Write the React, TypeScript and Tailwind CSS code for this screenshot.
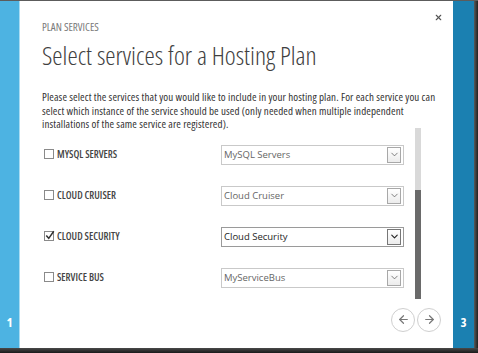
import { ChevronDown, ArrowLeft, ArrowRight, X } from "lucide-react";

type Service = { label: string; value: string; checked: boolean; active?: boolean };

const services: Service[] = [
  { label: "MYSQL SERVERS", value: "MySQL Servers", checked: false },
  { label: "CLOUD CRUISER", value: "Cloud Cruiser", checked: false },
  { label: "CLOUD SECURITY", value: "Cloud Security", checked: true, active: true },
  { label: "SERVICE BUS", value: "MyServiceBus", checked: false },
];

function Checkbox({ checked }: { checked: boolean }) {
  return (
    <span className="relative block size-[10px] border border-[#8a8a8a] bg-white">
      {checked && (
        <svg viewBox="0 0 12 12" className="absolute -top-[2px] left-0 size-[10px]">
          <path d="M1.5 6.5 L4.5 10 L10.5 1.5" fill="none" stroke="#333" strokeWidth="1.8" />
        </svg>
      )}
    </span>
  );
}

function ServiceSelect({ value, active }: { value: string; active?: boolean }) {
  return (
    <div
      className={`flex h-[20px] w-[183px] items-center justify-between border bg-white pl-[2px] pr-[2px] ${
        active ? "border-[#9a9a9a] text-[#1e1e1e]" : "border-[#c9c9c9] text-[#666]"
      }`}
    >
      <span className="text-[9.5px] leading-none">{value}</span>
      <span
        className={`flex h-[16px] w-[14px] items-center justify-center border bg-gradient-to-b from-white to-[#ececec] ${
          active ? "border-[#777]" : "border-[#a8a8a8]"
        }`}
      >
        <ChevronDown className="size-[11px]" strokeWidth={active ? 2.4 : 1.6} color={active ? "#222" : "#555"} />
      </span>
    </div>
  );
}

export default function App() {
  return (
    <div className="flex h-[353px] w-[478px] flex-col bg-[#2a2a2a] font-['Open_Sans',sans-serif]">
      <div className="h-px bg-[#5c5c5c]" />
      <div className="flex min-h-0 flex-1">
        <div className="flex w-[20px] items-end justify-center border-r border-[#a9dcf3] bg-[#4db3e2] pb-[20px]">
          <span className="text-[13px] font-bold leading-[12px] text-white font-stretch-condensed">1</span>
        </div>

        <main className="relative flex-1 bg-white pl-[22px]">
          <button type="button" className="absolute right-[10px] top-[12px] text-[#555]">
            <X className="size-[9px]" strokeWidth={3} />
          </button>

          <p className="pt-[20px] text-[11px] leading-[12px] text-[#7a7a7a] font-stretch-condensed">PLAN SERVICES</p>
          <h1 className="mt-[7px] text-[26px] font-light leading-[30px] text-[#404040] font-stretch-condensed">
            Select services for a Hosting Plan
          </h1>
          <p className="mt-[20px] w-[395px] text-[11px] leading-[13.5px] tracking-[0.12px] text-[#333] font-stretch-condensed">
            Please select the services that you would like to include in your hosting plan. For each service you can
            select which instance of the service should be used (only needed when multiple independent installations of
            the same service are registered).
          </p>

          <div className="-mt-[3px] flex">
            <ul className="w-[373px] pt-[17px]">
              {services.map((s) => (
                <li key={s.label} className="mb-[21px] flex h-[20px] items-center">
                  <div className="flex w-[179px] items-center gap-[3px] pl-[2px]">
                    <Checkbox checked={s.checked} />
                    <span className="text-[10.3px] font-semibold leading-none text-[#444] font-stretch-condensed">
                      {s.label}
                    </span>
                  </div>
                  <ServiceSelect value={s.value} active={s.active} />
                </li>
              ))}
            </ul>
            <div className="flex h-[171px] w-[6px] flex-col">
              <div className="h-[62px] bg-[#d9d9d9]" />
              <div className="flex-1 bg-[#6a6a6a]" />
            </div>
          </div>

          <div className="mr-[12px] -mt-[1px] flex justify-end gap-[2px]">
            <button
              type="button"
              className="flex size-[24px] items-center justify-center rounded-full border border-[#cfcfcf] text-[#777]"
            >
              <ArrowLeft className="size-[13px]" strokeWidth={2.2} />
            </button>
            <button
              type="button"
              className="flex size-[24px] items-center justify-center rounded-full border border-[#cfcfcf] text-[#777]"
            >
              <ArrowRight className="size-[13px]" strokeWidth={2.2} />
            </button>
          </div>
        </main>

        <div className="flex w-[21px] items-end justify-center bg-[#1b80b1] pb-[20px]">
          <span className="text-[13px] font-bold leading-[12px] text-white font-stretch-condensed">3</span>
        </div>
        <div className="w-[4px] bg-gradient-to-r from-[#5a5a5a] to-[#222]" />
      </div>
      <div className="h-[5px] bg-gradient-to-b from-[#4a4a4a] to-[#1a1a1a]" />
    </div>
  );
}
